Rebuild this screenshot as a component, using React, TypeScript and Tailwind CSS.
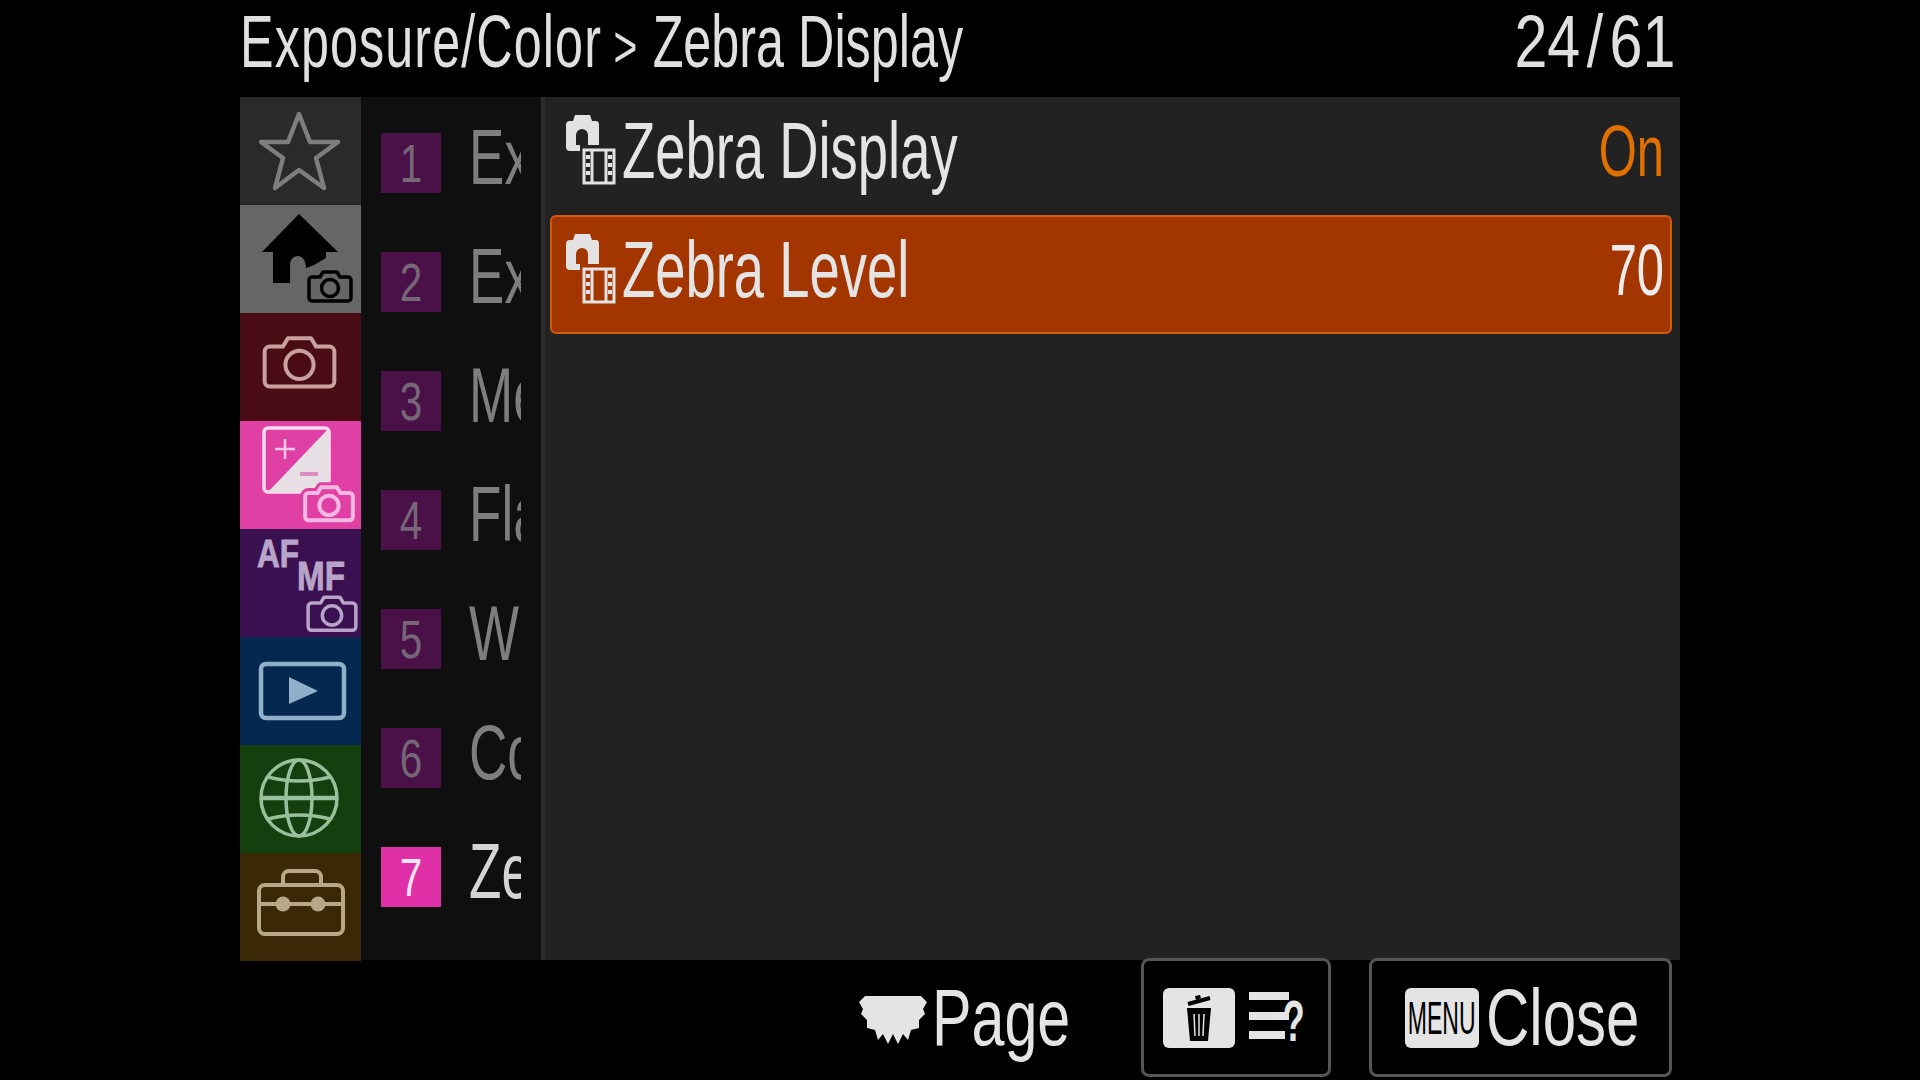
const Cam = ({ x, y, w, color, sw, fill = "none", halo }: { x: number; y: number; w: number; color: string; sw: number; fill?: string; halo?: string }) => {
  const s = w / 44;
  return (
    <g transform={`translate(${x} ${y}) scale(${s})`} fill={fill} stroke={color} strokeWidth={sw / s} strokeLinejoin="round">
      {halo && <path d="M4 7H12L15 2H29L32 7H40A3 3 0 0 1 43 10V28A3 3 0 0 1 40 31H4A3 3 0 0 1 1 28V10A3 3 0 0 1 4 7Z" stroke={halo} strokeWidth={(sw + 6) / s} />}
      <path d="M4 7H12L15 2H29L32 7H40A3 3 0 0 1 43 10V28A3 3 0 0 1 40 31H4A3 3 0 0 1 1 28V10A3 3 0 0 1 4 7Z" />
      <circle cx="22" cy="18" r="8.5" />
    </g>
  );
};

const Tile = ({ bg, children }: { bg: string; children: React.ReactNode }) => (
  <div className={`flex-1 ${bg}`}>
    <svg viewBox="0 0 121 108" className="block h-full w-full">{children}</svg>
  </div>
);

const Sidebar = () => (
  <div className="flex w-[121px] flex-col">
    <Tile bg="bg-[#2a2a2a]">
      <polygon points="59,17 70,45 98,45 76,61 84,91 59,73 35,91 43,61 21,45 48,45" fill="none" stroke="#7e7e7e" strokeWidth="4.5" strokeLinejoin="round" />
    </Tile>
    <Tile bg="bg-[#666666]">
      <path d="M59 9L98 47H86V53L74 60L66 63C66 55 62 51 58 51C53 51 50 55 50 60V78H33V47H22Z" fill="#000" />
      <Cam x={68} y={65} w={44} color="#000" sw={3.5} />
    </Tile>
    <Tile bg="bg-[#4a0c14]">
      <Cam x={23} y={22} w={73} color="#c8a0a0" sw={4} />
    </Tile>
    <Tile bg="bg-[#e040a4]">
      <rect x="24" y="7" width="65" height="64" rx="4" fill="none" stroke="#f6dcee" strokeWidth="3.5" />
      <path d="M89 7V67A4 4 0 0 1 85 71H28Z" fill="#e6e0e4" />
      <path d="M45 18V38M35 28H55" stroke="#f4c8e6" strokeWidth="2.5" />
      <path d="M60 53H78" stroke="#d98cc0" strokeWidth="4" />
      <Cam x={64} y={64} w={50} color="#f4b8e2" sw={4} fill="#e040a4" halo="#e040a4" />
    </Tile>
    <Tile bg="bg-[#3a1050]">
      <text x="17" y="38" fontSize="38" fontWeight="700" fontFamily="'Liberation Sans', sans-serif" fill="#b8a4c8" stroke="#b8a4c8" strokeWidth="0.9" textLength="42" lengthAdjust="spacingAndGlyphs">AF</text>
      <text x="57" y="61" fontSize="40" fontWeight="700" fontFamily="'Liberation Sans', sans-serif" fill="#b8a4c8" stroke="#b8a4c8" strokeWidth="0.9" textLength="48" lengthAdjust="spacingAndGlyphs">MF</text>
      <Cam x={67} y={66} w={50} color="#b8a4c8" sw={3.5} />
    </Tile>
    <Tile bg="bg-[#052850]">
      <rect x="21" y="27" width="83" height="54" rx="5" fill="none" stroke="#8fb0c8" strokeWidth="4.5" />
      <polygon points="49,40 78,54 49,67" fill="#8fb0c8" />
    </Tile>
    <Tile bg="bg-[#144010]">
      <g fill="none" stroke="#98c09a" strokeWidth="3.5">
        <circle cx="59" cy="53" r="38" />
        <ellipse cx="59" cy="53" rx="13" ry="38" />
        <path d="M21 53H97" strokeWidth="4.5" />
        <path d="M28 32Q59 40 90 32M28 74Q59 66 90 74" />
      </g>
    </Tile>
    <Tile bg="bg-[#3a2806]">
      <g fill="none" stroke="#b8a888" strokeWidth="4">
        <rect x="19" y="32" width="84" height="49" rx="6" />
        <path d="M43 32V24A6 6 0 0 1 49 18H75A6 6 0 0 1 81 24V32" />
        <path d="M19 51H103" />
      </g>
      <circle cx="43" cy="51" r="7.5" fill="#b8a888" />
      <circle cx="78" cy="51" r="7.5" fill="#b8a888" />
    </Tile>
  </div>
);

const sub = [
  ["1", "Exposure Comp."],
  ["2", "Exposure"],
  ["3", "Metering"],
  ["4", "Flash"],
  ["5", "White Balance"],
  ["6", "Color/Tone"],
  ["7", "Zebra Display"],
];

const Narrow = ({ className = "scale-x-[0.68] origin-left", children }: { className?: string; children: React.ReactNode }) => (
  <span className={`inline-block whitespace-nowrap ${className}`}>{children}</span>
);

const SubMenu = () => (
  <div className="flex w-[180px] flex-col bg-[#0f0f0f] pt-[6px]">
    {sub.map(([n, t], i) => {
      const on = i === 6;
      return (
        <div key={n} className="flex h-[119px] items-center pl-[20px]">
          <div className={`flex h-[60px] w-[60px] items-center justify-center text-[54px] leading-none ${on ? "bg-[#e030a8] text-[#f4e4f0]" : "bg-[#4a1048] text-[#766678]"}`}>
            <span className="inline-block scale-x-[0.75]">{n}</span>
          </div>
          <div className={`mb-[12px] ml-[28px] w-[52px] overflow-hidden text-[78px] leading-none ${on ? "text-[#d4d4d4]" : "text-[#7e7e7e]"}`}>
            <Narrow>{t}</Narrow>
          </div>
        </div>
      );
    })}
  </div>
);

const ItemIcon = () => (
  <svg viewBox="0 0 52 74" className="h-[74px] w-[52px] shrink-0">
    <path d="M1 11Q1 7 5 7H8L10 1H25L27 7H31Q34 7 34 11V31H23V21A6 6 0 1 0 11 21V31H15V37H5Q1 37 1 33Z" fill="#e2e2e2" />
    <g fill="none" stroke="#e2e2e2" strokeWidth="3">
      <rect x="19" y="36" width="30" height="33" />
      <path d="M27 36V69M41 36V69" />
    </g>
    <g fill="#e2e2e2">
      <rect x="21" y="41" width="4" height="4" /><rect x="21" y="49" width="4" height="4" /><rect x="21" y="57" width="4" height="4" />
      <rect x="43" y="41" width="4" height="4" /><rect x="43" y="49" width="4" height="4" /><rect x="43" y="57" width="4" height="4" />
    </g>
  </svg>
);

const Row = ({ label, value, selected }: { label: string; value: string; selected?: boolean }) => (
  <div className={`flex items-center justify-between rounded-[6px] border-2 pb-[10px] pl-[13px] pr-[6px] ${selected ? "h-[119px] border-[#d05a10] bg-[#a33500]" : "h-[118px] border-transparent"}`}>
    <div className="flex min-w-0 items-center">
      <ItemIcon />
      <span className="ml-[5px] text-[80px] leading-none text-[#e4e4e4]">
        <Narrow>{label}</Narrow>
      </span>
    </div>
    <span className={`text-[72px] leading-none ${selected ? "text-[#ececec]" : "text-[#e07000]"}`}>
      <Narrow className="origin-right scale-x-[0.68]">{value}</Narrow>
    </span>
  </div>
);

export default function App() {
  return (
    <div className="h-[1080px] w-[1920px] overflow-hidden bg-black px-[240px] font-['Liberation_Sans',sans-serif]">
      <header className="flex h-[97px] items-center justify-between pb-[14px] text-[74px] leading-none text-[#e0e0e0]">
        <Narrow>
          <span className="tracking-[1.6px]">Exposure/Color</span><span className="text-[60px]"> &gt; </span><span className="ml-[6px]">Zebra Display</span>
        </Narrow>
        <Narrow className="origin-right scale-x-[0.8] pr-[6px]">
          24<span className="mx-[8px]">/</span>61
        </Narrow>
      </header>
      <main className="flex h-[863px]">
        <Sidebar />
        <SubMenu />
        <div className="w-[4px] bg-[#2c2c2c]" />
        <section className="flex-1 bg-[#222222] pl-[5px] pr-[8px]">
          <Row label="Zebra Display" value="On" />
          <Row label="Zebra Level" value="70" selected />
        </section>
      </main>
      <footer className="flex items-start justify-end pr-[8px] text-[80px] leading-none text-[#e4e4e4]">
        <div className="flex h-[120px] items-center">
          <svg viewBox="0 0 68 48" className="h-[48px] w-[68px]">
            <polygon points="6,0 62,0 68,6 64,13 66,18 60,24 60,32 52,34 49,44 44,38 39,48 34,38 29,48 24,38 19,44 16,34 8,32 8,24 2,18 4,13 0,6" fill="#e4e4e4" />
          </svg>
          <span className="mb-[4px] ml-[5px] w-[134px]"><Narrow className="origin-left scale-x-[0.74]">Page</Narrow></span>
        </div>
        <div className="-mt-[2px] ml-[75px] flex h-[119px] w-[190px] items-center rounded-[8px] border-[3px] border-[#555555] pl-[19px]">
          <div className="flex h-[60px] w-[72px] items-center justify-center rounded-[6px] bg-[#e4e4e4]">
            <svg viewBox="0 0 40 50" className="h-[50px] w-[40px]">
              <path d="M9 11L31 5" stroke="#000" strokeWidth="4" />
              <path d="M17 7L16 3L21 2L22 5" fill="#000" />
              <path d="M8 15H32L29 48H11Z" fill="#000" />
              <path d="M15 21L16 43M20 21V43M25 21L24 43" stroke="#e4e4e4" strokeWidth="1.5" />
            </svg>
          </div>
          <div className="relative ml-[14px] h-[60px] w-[56px]">
            <svg viewBox="0 0 56 60" className="h-[60px] w-[56px]">
              <path d="M0 8H40M0 28H40M0 47H36" stroke="#e4e4e4" strokeWidth="8" />
            </svg>
            <span className="absolute bottom-[-2px] right-[-6px] text-[58px] font-bold leading-none"><span className="inline-block scale-x-[0.62]">?</span></span>
          </div>
        </div>
        <div className="-mt-[2px] ml-[38px] flex h-[119px] w-[303px] items-center rounded-[8px] border-[3px] border-[#555555] pl-[33px]">
          <div className="flex h-[60px] w-[74px] shrink-0 items-center justify-center rounded-[6px] bg-[#e4e4e4] text-[46px] text-black">
            <span className="inline-block scale-x-[0.5]">MENU</span>
          </div>
          <span className="ml-[7px]"><Narrow className="origin-left scale-x-[0.75]">Close</Narrow></span>
        </div>
      </footer>
    </div>
  );
}
